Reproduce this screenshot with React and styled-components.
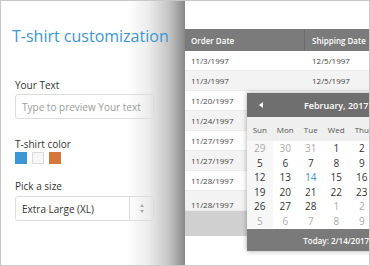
import React from 'react'
import styled, { createGlobalStyle } from 'styled-components'

const Global = createGlobalStyle`
  html, body { margin: 0; padding: 0; background: #fff; }
  body { font-family: "Open Sans", "DejaVu Sans", sans-serif; }
`

const Frame = styled.div`
  width: 370px;
  height: 266px;
  box-sizing: border-box;
  border: 1px solid #c9c9c9;
  display: flex;
  overflow: hidden;
  background: #fff;
`

const Side = styled.div`
  width: 184px;
  flex: none;
  box-sizing: border-box;
  padding: 25px 0 0 14px;
  display: flex;
  flex-direction: column;
  background: linear-gradient(to right, #fff 0, #fff 126px, #ececec 148px, #c4c4c4 168px, #a0a0a0 178px, #878787 184px);
`

const Title = styled.h1`
  margin: 0 0 0 -3px;
  font-size: 16px;
  line-height: 20px;
  font-weight: 400;
  color: #3b97d3;
  white-space: nowrap;
`

const Label = styled.div`
  margin-top: ${p => p.$gap}px;
  font-size: 10px;
  line-height: 12px;
  color: #333;
`

const Field = styled.div`
  margin-top: ${p => p.$gap}px;
  width: 139px;
  height: 25px;
  box-sizing: border-box;
  border: 1px solid #dcdcdc;
  border-radius: 3px;
  display: flex;
  align-items: center;
  font-size: 10px;
  color: ${p => (p.$placeholder ? '#9a9a9a' : '#333')};
`

const FieldText = styled.span`
  flex: 1;
  padding-left: 6px;
  white-space: nowrap;
`

const Spinner = styled.div`
  width: 23px;
  height: 100%;
  border-left: 1px solid #dcdcdc;
  display: flex;
  flex-direction: column;
  align-items: center;
  justify-content: center;
  gap: 3px;
`

const Arrow = styled.span`
  width: 0;
  height: 0;
  border-left: 2.5px solid transparent;
  border-right: 2.5px solid transparent;
  ${p => (p.$down ? 'border-top: 3px solid #a8a8a8;' : 'border-bottom: 3px solid #a8a8a8;')}
`

const Swatches = styled.div`
  margin-top: 2px;
  display: flex;
  gap: 5px;
`

const Swatch = styled.span`
  width: 12px;
  height: 12px;
  box-sizing: border-box;
  background: ${p => p.$color};
  border: ${p => (p.$outlined ? '1px solid #dadada' : 'none')};
`

const Main = styled.div`
  flex: 1;
  position: relative;
  overflow: hidden;
  background: #fff;
`

const Grid = styled.div`
  margin-top: 28px;
  width: 260px;
`

const HeadRow = styled.div`
  display: grid;
  grid-template-columns: 119px 141px;
  height: 22px;
  background: #7b7b7b;
`

const HeadCell = styled.div`
  display: flex;
  align-items: center;
  padding-left: ${p => (p.$first ? 6 : 7)}px;
  font-size: 8px;
  font-weight: 600;
  color: #fff;
  border-left: ${p => (p.$first ? 'none' : '1px solid #6c6c6c')};
`

const Body = styled.div`
  height: 160px;
  overflow: hidden;
`

const Row = styled.div`
  display: grid;
  grid-template-columns: 119px 141px;
  height: 20px;
  box-sizing: border-box;
  padding-top: ${p => p.$shift || 0}px;
  background: ${p => (p.$alt ? '#f3f3f3' : '#fff')};
  border-bottom: 1px solid #ececec;
`

const Cell = styled.div`
  display: flex;
  align-items: center;
  padding-left: ${p => (p.$first ? 6 : 8)}px;
  font-size: 8px;
  color: #444;
`

const Pager = styled.div`
  height: 25px;
  background: #d0d0d0;
`

const Calendar = styled.div`
  position: absolute;
  left: 62px;
  top: 92px;
  width: 178.5px;
  background: #fff;
  box-shadow: 0 0 5px rgba(0, 0, 0, 0.35);
`

const CalHead = styled.div`
  height: 24px;
  background: #6f6f6f;
  color: #fff;
  display: flex;
  align-items: center;
  justify-content: center;
  position: relative;
  font-size: 9px;
  font-weight: 600;
`

const Prev = styled.span`
  position: absolute;
  left: 12px;
  top: 9px;
  width: 0;
  height: 0;
  border-top: 3px solid transparent;
  border-bottom: 3px solid transparent;
  border-right: 4px solid #fff;
`

const Week = styled.div`
  display: grid;
  grid-template-columns: repeat(7, 25.5px);
  height: 24px;
  background: #efefef;
`

const DayName = styled.div`
  display: flex;
  align-items: center;
  justify-content: center;
  font-size: 8px;
  color: #555;
`

const Dates = styled.div`
  display: grid;
  grid-template-columns: repeat(7, 25.5px);
  grid-auto-rows: 14.5px;
`

const DateCell = styled.div`
  display: flex;
  align-items: center;
  justify-content: center;
  font-size: 10px;
  background: ${p => (p.$weekend ? '#f7f7f7' : 'transparent')};
  color: ${p => (p.$today ? '#3b97d3' : p.$muted ? '#ababab' : '#333')};
`

const CalFoot = styled.div`
  height: 22px;
  margin-top: 1px;
  background: #7a7a7a;
  color: #fff;
  display: flex;
  align-items: center;
  justify-content: center;
  font-size: 8px;
  font-weight: 600;
`

const rows = [
  ['11/3/1997', '12/5/1997'],
  ['11/3/1997', '12/5/1997'],
  ['11/20/1997', '12/5/1997'],
  ['11/24/1997', '12/5/1997'],
  ['11/27/1997', '12/5/1997'],
  ['11/27/1997', '12/5/1997'],
  ['11/28/1997', '12/5/1997'],
  ['11/28/1997', '12/5/1997'],
]

const weeks = [
  [29, 30, 31, 1, 2, 3, 4],
  [5, 6, 7, 8, 9, 10, 11],
  [12, 13, 14, 15, 16, 17, 18],
  [19, 20, 21, 22, 23, 24, 25],
  [26, 27, 28, 1, 2, 3, 4],
  [5, 6, 7, 8, 9, 10, 11],
]

const isMuted = (w, d) => (w === 0 && d < 3) || (w === 4 && d > 2) || w === 5

export default function App() {
  return (
    <>
      <Global />
      <Frame>
        <Side>
          <Title>T-shirt customization</Title>
          <Label $gap={33}>Your Text</Label>
          <Field $gap={3} $placeholder>
            <FieldText>Type to preview Your text</FieldText>
          </Field>
          <Label $gap={19}>T-shirt color</Label>
          <Swatches>
            <Swatch $color="#3b97d3" />
            <Swatch $color="#f6f6f6" $outlined />
            <Swatch $color="#d4773a" />
          </Swatches>
          <Label $gap={16}>Pick a size</Label>
          <Field $gap={4}>
            <FieldText>Extra Large (XL)</FieldText>
            <Spinner>
              <Arrow />
              <Arrow $down />
            </Spinner>
          </Field>
        </Side>
        <Main>
          <Grid>
            <HeadRow>
              <HeadCell $first>Order Date</HeadCell>
              <HeadCell>Shipping Date</HeadCell>
            </HeadRow>
            <Body>
              {rows.map(([a, b], i) => (
                <Row key={i} $alt={i % 2 === 1} $shift={i === 7 ? 8 : 0}>
                  <Cell $first>{a}</Cell>
                  <Cell>{b}</Cell>
                </Row>
              ))}
            </Body>
            <Pager />
          </Grid>
          <Calendar>
            <CalHead>
              <Prev />
              February, 2017
            </CalHead>
            <Week>
              {['Sun', 'Mon', 'Tue', 'Wed', 'Thu', 'Fri', 'Sat'].map(d => (
                <DayName key={d}>{d}</DayName>
              ))}
            </Week>
            <Dates>
              {weeks.map((week, w) =>
                week.map((d, i) => (
                  <DateCell
                    key={`${w}-${i}`}
                    $weekend={i === 0}
                    $muted={isMuted(w, i)}
                    $today={w === 2 && i === 2}
                  >
                    {d}
                  </DateCell>
                ))
              )}
            </Dates>
            <CalFoot>Today: 2/14/2017</CalFoot>
          </Calendar>
        </Main>
      </Frame>
    </>
  )
}
